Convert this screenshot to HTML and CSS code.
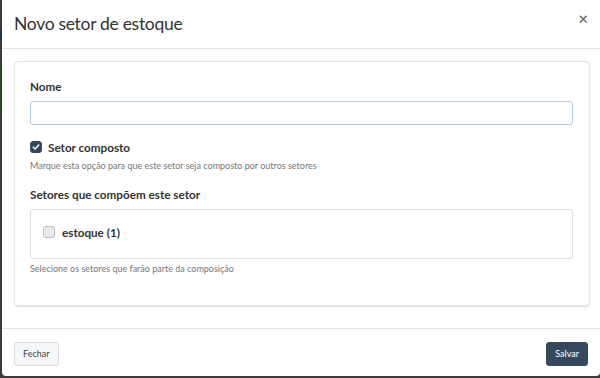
FILE: index.html
```html
<!doctype html>
<html>
<head>
    <meta charset="utf-8">
    <title>Novo setor de estoque</title>
    <link rel="stylesheet" href="styles.css">
</head>
<body>
<div class="modal">
	<div class="modal-header">
		<h4 class="modal-title">Novo setor de estoque</h4>
		<span class="close">&times;</span>
	</div>
	<div class="modal-body">
		<div class="card">
			<label class="label">Nome</label>
			<input class="input" type="text">

			<div class="check-row">
				<span class="check checked">
					<svg width="8" height="8" viewBox="0 0 8 8"><path d="M1.3 4.2 L3.2 6 L6.7 2" fill="none" stroke="#fff" stroke-width="1.5" stroke-linecap="round" stroke-linejoin="round"/></svg>
				</span>
				<span class="check-text">Setor composto</span>
			</div>
			<p class="help">Marque esta opção para que este setor seja composto por outros setores</p>

			<label class="label label-sub">Setores que compõem este setor</label>
			<div class="list-box">
				<div class="check-row">
					<span class="check"></span>
					<span class="check-text">estoque (1)</span>
				</div>
			</div>
			<p class="help">Selecione os setores que farão parte da composição</p>
		</div>
	</div>
	<div class="modal-footer">
		<button class="btn btn-default">Fechar</button>
		<button class="btn btn-primary">Salvar</button>
	</div>
</div>
</body>
</html>
```

FILE: styles.css
```css
*{margin: 0;padding: 0;box-sizing: border-box;}
body,html{height: 100%;}
body{
	background: linear-gradient(to bottom, #3b3b3b 0, #3b3b3b 30px, #1d3550 30px, #1d3550 40px, #3b3b3b 40px, #3b3b3b 64px, #1f4a24 64px, #1f4a24 112px, #3b3b3b 112px);
	font-family: Lato, "Open Sans", sans-serif;
	color: #333;
	padding: 0 0 2px 2px;
}
.modal{
	background: #fff;
	height: 376px;
	border-radius: 0 0 4px 4px;
	display: flex;flex-direction: column;
}
.modal-header{
	height: 49px;
	border-bottom: 1px solid #e5e5e5;
	display: flex;align-items: center;justify-content: space-between;
	padding: 0 12px 0 12px;
}
.modal-title{
	font-weight: normal;font-size: 17.5px;color: #333;
	letter-spacing: -0.3px;
	margin-top: -2px;
}
.close{
	font-size: 17px;font-weight: bold;color: #7a7a7a;
	margin-top: -12px;line-height: 1;
}
.modal-body{
	padding: 12px 10px 0 12px;
	flex: 1;
}
.card{
	border: 1px solid #e3e3e3;
	border-radius: 4px;
	box-shadow: 0 1px 2px rgba(0,0,0,0.12);
	padding: 16px 14px 22px 15px;
	height: 245px;
}
.label{
	display: block;
	font-size: 11.7px;font-weight: bold;color: #333;
	line-height: 16px;
}
.input{
	display: block;
	width: 543px;height: 24px;
	margin-top: 7px;
	border: 1px solid #b8c8de;border-radius: 3px;
	outline: none;
}
.check-row{
	display: flex;align-items: center;
	margin-top: 14px;
}
.check{
	width: 12px;height: 12px;border-radius: 3px;
	background: #e9eaee;border: 1px solid #b9bbc2;
	display: flex;align-items: center;justify-content: center;
}
.check.checked{
	background: #34495e;border-color: #34495e;
}
.check-text{
	font-size: 11.7px;font-weight: bold;color: #333;
	margin-left: 6px;line-height: 16px;
}
.help{
	font-size: 9px;color: #777;
	margin-top: 5px;line-height: 12px;
}
.label-sub{
	margin-top: 14px;
}
.list-box{
	width: 543px;height: 50px;
	margin-top: 7px;
	border: 1px solid #e0e0e0;border-radius: 3px;
	padding: 0 12px;
}
.list-box .check-row{
	margin-top: 14px;
}
.list-box .check-text{
	margin-left: 7px;
}
.list-box + .help{
	margin-top: 4px;
}
.modal-footer{
	height: 48px;
	border-top: 1px solid #e5e5e5;
	display: flex;align-items: center;justify-content: space-between;
	padding: 0 12px 0 12px;
	margin-bottom: 0;
}
.btn{
	height: 24px;
	border-radius: 3px;
	font-family: Lato, "Open Sans", sans-serif;
	font-size: 9px;
	padding: 0 8px;
	margin-top: 2px;
}
.btn-default{
	background: #f6f7f9;border: 1px solid #d9dbe0;color: #444;
}
.btn-primary{
	background: #34495e;border: 1px solid #34495e;color: #fff;
}
```
